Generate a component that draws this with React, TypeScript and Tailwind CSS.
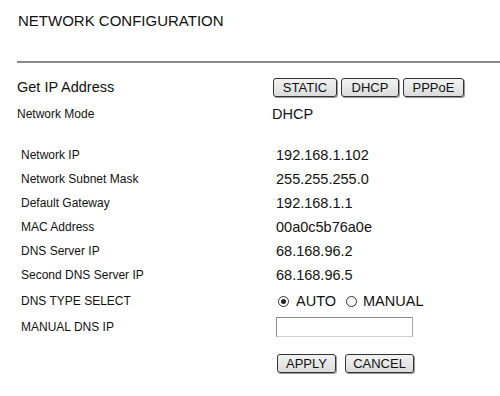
import React from 'react';

const rows: { label: string; value: string }[] = [
  { label: 'Network IP', value: '192.168.1.102' },
  { label: 'Network Subnet Mask', value: '255.255.255.0' },
  { label: 'Default Gateway', value: '192.168.1.1' },
  { label: 'MAC Address', value: '00a0c5b76a0e' },
  { label: 'DNS Server IP', value: '68.168.96.2' },
  { label: 'Second DNS Server IP', value: '68.168.96.5' },
];

const Btn: React.FC<{ children: React.ReactNode; w: string }> = ({ children, w }) => (
  <button
    className={`${w} h-[19px] flex items-center justify-center rounded-[3px] border border-[#333] bg-gradient-to-b from-[#f2f2f2] to-[#dcdcdc] text-[13px] leading-none text-[#111] shadow-[1px_1px_0_#9a9a9a]`}
  >
    {children}
  </button>
);

const Radio: React.FC<{ checked?: boolean }> = ({ checked }) => (
  <span className="w-[11px] h-[11px] rounded-full border border-[#333] flex items-center justify-center bg-white">
    {checked && <span className="w-[5px] h-[5px] rounded-full bg-[#222]" />}
  </span>
);

export default function App() {
  return (
    <div className="w-[500px] h-[396px] bg-white text-[#111] font-['Liberation_Sans',Arial,sans-serif] overflow-hidden">
      <div className="pt-[13px] pl-[18px] text-[15px] leading-none">NETWORK CONFIGURATION</div>

      <div className="mt-[33px] ml-[17px] h-[2px] bg-[#8a8a8a]" />

      {/* address mode */}
      <div className="mt-[10px] pl-[17px] flex items-center h-[28px]">
        <span className="w-[256px] text-[14.5px] leading-none">Get IP Address</span>
        <div className="flex gap-[4px]">
          <Btn w="w-[64px]">STATIC</Btn>
          <Btn w="w-[58px]">DHCP</Btn>
          <Btn w="w-[61px]">PPPoE</Btn>
        </div>
      </div>
      <div className="pl-[17px] flex items-center h-[26px]">
        <span className="w-[255px] text-[12px] leading-none">Network Mode</span>
        <span className="text-[14.5px] leading-none">DHCP</span>
      </div>

      {/* details */}
      <div className="mt-[16px] pl-[21px]">
        {rows.map((r) => (
          <div key={r.label} className="flex items-center h-[24px]">
            <span className="w-[255px] text-[12px] leading-none">{r.label}</span>
            <span className="text-[14.5px] leading-none">{r.value}</span>
          </div>
        ))}
        <div className="flex items-center h-[28px]">
          <span className="w-[255px] text-[12px] leading-none">DNS TYPE SELECT</span>
          <div className="flex items-center text-[14.5px] leading-none pl-[2px]">
            <Radio checked />
            <span className="ml-[7px]">AUTO</span>
            <span className="ml-[10px]"><Radio /></span>
            <span className="ml-[6px]">MANUAL</span>
          </div>
        </div>
        <div className="flex items-center h-[24px]">
          <span className="w-[255px] text-[12px] leading-none">MANUAL DNS IP</span>
          <input
            type="text"
            className="w-[137px] h-[20px] border border-[#8a8a8a] border-b-[#cfcfcf] border-r-[#a8a8a8] bg-white outline-none"
          />
        </div>
        <div className="mt-[12px] flex items-center h-[24px] pl-[1px]">
          <span className="w-[255px]" />
          <div className="flex gap-[9px]">
            <Btn w="w-[59px]">APPLY</Btn>
            <Btn w="w-[69px]">CANCEL</Btn>
          </div>
        </div>
      </div>
    </div>
  );
}
